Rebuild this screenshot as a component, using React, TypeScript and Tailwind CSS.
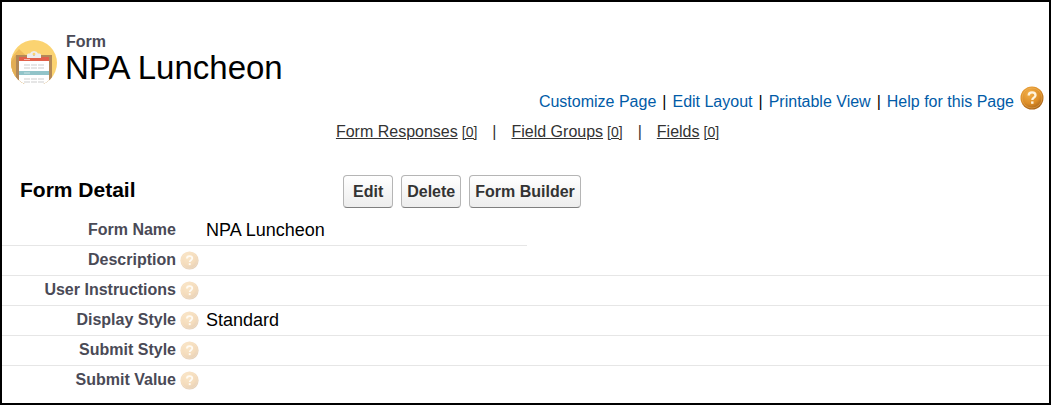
import React from "react";

function HelpIcon({ className, id }: { className: string; id: string }) {
  return (
    <svg viewBox="0 0 24 24" className={className} aria-hidden="true">
      <defs>
        <radialGradient id={id} cx="0.4" cy="0.3" r="0.75">
          <stop offset="0" stopColor="#f3b04a" />
          <stop offset="0.6" stopColor="#dc8d27" />
          <stop offset="1" stopColor="#a05c16" />
        </radialGradient>
      </defs>
      <circle cx="12" cy="12" r="11.5" fill={`url(#${id})`} />
      <circle cx="12" cy="12" r="10" fill="none" stroke="#f6c270" strokeOpacity="0.4" />
      <path
        d="M8.7 9.6c0-2 1.4-3.2 3.4-3.2s3.4 1.1 3.4 2.9c0 2.3-3.2 2.4-3.2 4.7"
        fill="none"
        stroke="#fff4de"
        strokeWidth="2.3"
      />
      <rect x="11.1" y="15.4" width="2.4" height="2.4" fill="#fff4de" />
    </svg>
  );
}

function ClipboardIcon() {
  return (
    <svg viewBox="0 0 46 44" className="h-[44px] w-[46px] shrink-0" aria-hidden="true">
      <defs>
        <clipPath id="disc">
          <circle cx="23" cy="23" r="23" />
        </clipPath>
      </defs>
      <g clipPath="url(#disc)">
        <rect width="46" height="44" fill="#fbd371" />
        <path d="M0 18 8 9l16 15v20H0z" fill="#eebb5c" />
        <path d="M0 22 5 15v29H0z" fill="#e2ad55" />
        <rect x="5" y="15" width="36" height="29" fill="#b28858" />
        <rect x="8" y="17" width="30" height="27" fill="#fff" />
        <rect x="8" y="17" width="30" height="4" fill="#e2604a" />
        <path d="M13 19.5h6" stroke="#f4b3a6" />
        <rect x="8" y="31" width="30" height="4" fill="#92c4c9" />
        <path d="M13 33h6" stroke="#c9e3e5" />
        <path
          d="M13 25h6m1 0h6m1 0h6M13 28h6m1 0h6m1 0h6M13 39h6m1 0h6m1 0h6M13 42h6m1 0h6m1 0h6"
          stroke="#dedede"
          strokeWidth="1.4"
        />
        <path
          fillRule="evenodd"
          d="M16 18v-3q0-1.500 1.500-1.500H19q.800-2.500 4-2.500t4 2.500h1.500q1.500 0 1.500 1.500v3zM23 12.800a1.400 1.400 0 1 0 0 2.800 1.400 1.400 0 0 0 0-2.800z"
          fill="#ededed"
        />
      </g>
    </svg>
  );
}

const pageLinks = ["Customize Page", "Edit Layout", "Printable View", "Help for this Page"];
const relatedLists = ["Form Responses", "Field Groups", "Fields"];
const actions = [
  { label: "Edit", pad: "px-[9px]" },
  { label: "Delete", pad: "px-[5px]" },
  { label: "Form Builder", pad: "px-[5px]" },
];
const fields = [
  { label: "Form Name", value: "NPA Luncheon", help: false },
  { label: "Description", value: "", help: true },
  { label: "User Instructions", value: "", help: true },
  { label: "Display Style", value: "Standard", help: true },
  { label: "Submit Style", value: "", help: true },
  { label: "Submit Value", value: "", help: true },
];

export default function App() {
  return (
    <main className="min-h-screen border-2 border-black bg-white font-['Liberation_Sans',Arial,sans-serif] text-base text-black">
      <header className="flex items-end gap-2 pl-[9px] pt-[30px]">
        <ClipboardIcon />
        <div>
          <p className="pl-px font-bold leading-5 text-[#4a4a56]">Form</p>
          <h1 className="text-[33px] leading-8">NPA Luncheon</h1>
        </div>
      </header>

      <nav aria-label="Page" className="mt-[2px] flex items-start justify-end pr-[5px] leading-8">
        {pageLinks.map((label, i) => (
          <React.Fragment key={label}>
            {i > 0 && <span className="px-[6px]">|</span>}
            <a href="#" className="text-[#015ba7]">
              {label}
            </a>
          </React.Fragment>
        ))}
        <a href="#" aria-label="Help" className="ml-[6px]">
          <HelpIcon id="page-help" className="size-6" />
        </a>
      </nav>

      <nav aria-label="Related lists" className="mt-1 flex justify-center pl-[4px] leading-5 text-[#333]">
        {relatedLists.map((label, i) => (
          <React.Fragment key={label}>
            {i > 0 && <span className="px-[15px]">|</span>}
            <a href="#" className="flex items-baseline gap-1">
              <span className="underline">{label}</span>
              <span className="text-sm underline">[0]</span>
            </a>
          </React.Fragment>
        ))}
      </nav>

      <section>
        <div className="mt-[33px] flex items-center pl-[18px]">
          <h2 className="w-[323px] pb-1 text-[21px] font-bold leading-7">Form Detail</h2>
          <div className="flex gap-2">
            {actions.map(({ label, pad }) => (
              <button
                key={label}
                type="button"
                className={`h-[33px] rounded-[4px] border border-[#b5b5b5] border-b-[#7f7f7f] bg-linear-to-b from-white to-[#ededed] font-bold text-[#333] ${pad}`}
              >
                {label}
              </button>
            ))}
          </div>
        </div>

        <table className="mt-2 w-full table-fixed border-separate border-spacing-0">
          <colgroup>
            <col className="w-[174px]" />
            <col className="w-[351px]" />
            <col />
          </colgroup>
          <tbody>
            {fields.map(({ label, value, help }, i) => {
              const line = i < fields.length - 1 ? "border-[#e6e6e6]" : "border-transparent";
              return (
                <tr key={label} className="h-[30px]">
                  <th scope="row" className={`border-b px-0 pt-0 pb-px text-right font-bold text-[#4a4a56] ${line}`}>
                    {label}
                  </th>
                  <td colSpan={i === 0 ? 1 : 2} className={`border-b px-0 pt-0 pb-px ${line}`}>
                    <div className="flex items-center gap-[7px] pl-1 text-lg leading-6">
                      <span className="size-[19px]">
                        {help && (
                          <button type="button" aria-label={`Help for ${label}`} className="block">
                            <HelpIcon id={`help-${i}`} className="size-[19px] opacity-30" />
                          </button>
                        )}
                      </span>
                      {value}
                    </div>
                  </td>
                  {i === 0 && <td />}
                </tr>
              );
            })}
          </tbody>
        </table>
      </section>
    </main>
  );
}
